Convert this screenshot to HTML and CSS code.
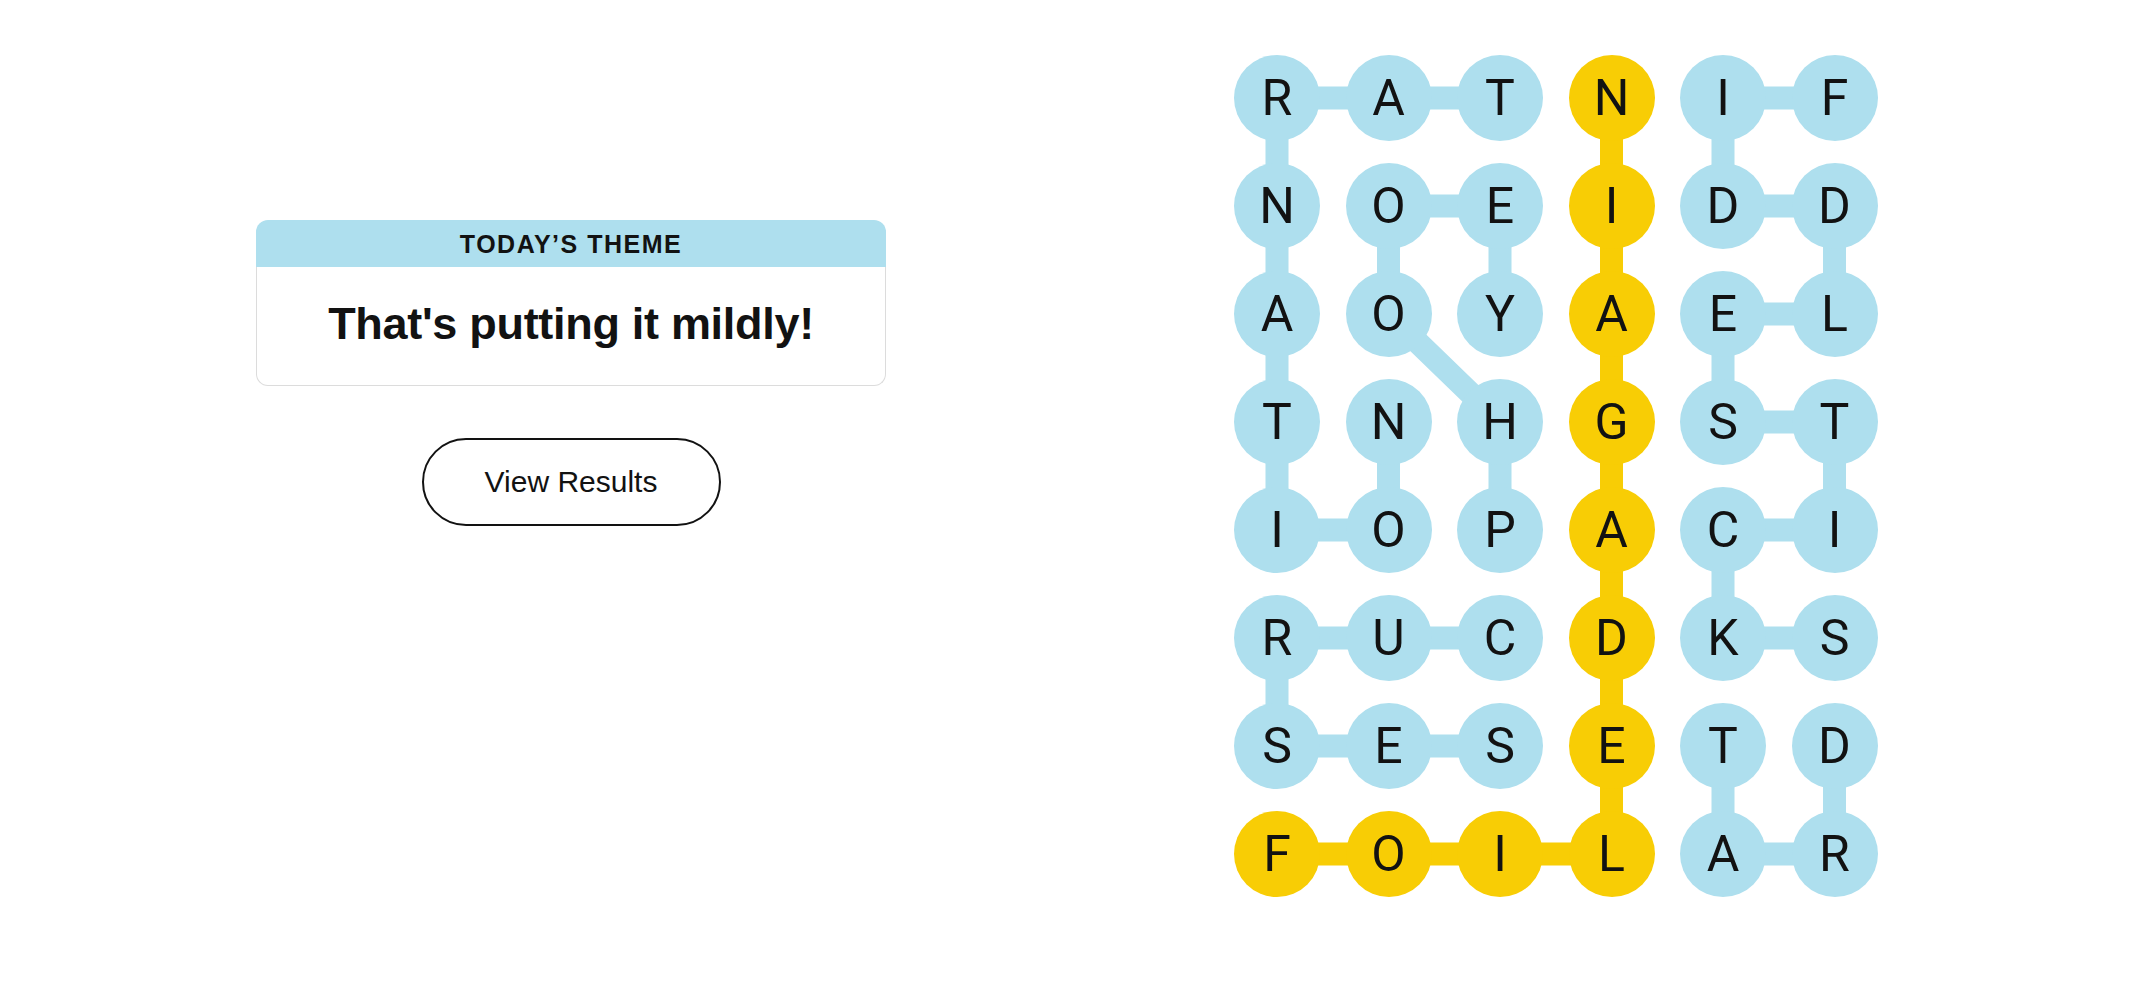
FILE: index.html
```html
<!DOCTYPE html>
<html lang="en">
<head>
<meta charset="utf-8">
<title>Strands</title>
<link rel="stylesheet" href="styles.css">
</head>
<body>
<main class="page">
  <section class="side">
    <div class="theme-card">
      <div class="theme-head">TODAY’S THEME</div>
      <div class="theme-body">That's putting it mildly!</div>
    </div>
    <button class="results-btn" type="button">View Results</button>
  </section>

  <section class="board">
    <svg class="links" viewBox="0 0 643.5 842" width="643.5" height="842" aria-hidden="true">
      <polyline class="link blue" points="266,43 154.5,43 43,43 43,151 43,259 43,367 43,475 154.5,475 154.5,367"/>
      <polyline class="link blue" points="266,475 266,367 154.5,259 154.5,151 266,151 266,259"/>
      <polyline class="link blue" points="266,583 154.5,583 43,583 43,691 154.5,691 266,691"/>
      <polyline class="link blue" points="600.5,43 489,43 489,151 600.5,151 600.5,259 489,259 489,367 600.5,367 600.5,475 489,475 489,583 600.5,583"/>
      <polyline class="link blue" points="600.5,691 600.5,799 489,799 489,691"/>
      <polyline class="link gold" points="43,799 154.5,799 266,799 377.5,799 377.5,43"/>
    </svg>
    <div class="grid">
      <button class="cell">R</button><button class="cell">A</button><button class="cell">T</button><button class="cell found">N</button><button class="cell">I</button><button class="cell">F</button>
      <button class="cell">N</button><button class="cell">O</button><button class="cell">E</button><button class="cell found">I</button><button class="cell">D</button><button class="cell">D</button>
      <button class="cell">A</button><button class="cell">O</button><button class="cell">Y</button><button class="cell found">A</button><button class="cell">E</button><button class="cell">L</button>
      <button class="cell">T</button><button class="cell">N</button><button class="cell">H</button><button class="cell found">G</button><button class="cell">S</button><button class="cell">T</button>
      <button class="cell">I</button><button class="cell">O</button><button class="cell">P</button><button class="cell found">A</button><button class="cell">C</button><button class="cell">I</button>
      <button class="cell">R</button><button class="cell">U</button><button class="cell">C</button><button class="cell found">D</button><button class="cell">K</button><button class="cell">S</button>
      <button class="cell">S</button><button class="cell">E</button><button class="cell">S</button><button class="cell found">E</button><button class="cell">T</button><button class="cell">D</button>
      <button class="cell found">F</button><button class="cell found">O</button><button class="cell found">I</button><button class="cell found">L</button><button class="cell">A</button><button class="cell">R</button>
    </div>
  </section>
</main>
</body>
</html>
```

FILE: styles.css
```css
html, body {
  margin: 0;
  padding: 0;
  background: #ffffff;
}

body {
  width: 2138px;
  height: 988px;
  overflow: hidden;
  font-family: "Liberation Sans", Arial, sans-serif;
  color: #121212;
}

.page {
  display: flex;
  align-items: flex-start;
  gap: 348px;
  padding: 55px 0 0 256px;
}

.side {
  width: 630px;
  margin-top: 165px;
  display: flex;
  flex-direction: column;
  align-items: center;
  gap: 52px;
}

.theme-card {
  width: 630px;
  box-sizing: border-box;
}

.theme-head {
  height: 47px;
  background: #aedfee;
  border-radius: 12px 12px 0 0;
  display: flex;
  align-items: center;
  justify-content: center;
  font-size: 25px;
  font-weight: 700;
  letter-spacing: 1.5px;
  color: #121212;
  padding-top: 2px;
  box-sizing: border-box;
}

.theme-body {
  height: 119px;
  box-sizing: border-box;
  border: 1.5px solid #dcdcdc;
  border-top: none;
  border-radius: 0 0 12px 12px;
  display: flex;
  align-items: center;
  justify-content: center;
  font-size: 45px;
  font-weight: 700;
  letter-spacing: -0.3px;
  color: #121212;
  padding-bottom: 4px;
}

.results-btn {
  width: 299px;
  height: 88px;
  border: 2px solid #121212;
  border-radius: 44px;
  background: #ffffff;
  font-family: "Liberation Sans", Arial, sans-serif;
  font-size: 30px;
  color: #121212;
  padding: 0;
  cursor: pointer;
}

.board {
  position: relative;
  width: 643.5px;
  height: 842px;
}

.links {
  position: absolute;
  left: 0;
  top: 0;
  overflow: visible;
}

.link {
  fill: none;
  stroke-width: 23px;
  stroke-linejoin: round;
  stroke-linecap: butt;
}

.link.blue { stroke: #aedfee; }
.link.gold { stroke: #f8cd05; }

.grid {
  position: relative;
  display: grid;
  grid-template-columns: repeat(6, 86px);
  grid-template-rows: repeat(8, 86px);
  column-gap: 25.5px;
  row-gap: 22px;
}

.cell {
  width: 86px;
  height: 86px;
  border: none;
  border-radius: 50%;
  background: #aedfee;
  padding: 0;
  display: flex;
  align-items: center;
  justify-content: center;
  font-family: Roboto, "Liberation Sans", sans-serif;
  font-size: 50px;
  font-weight: 400;
  line-height: 1;
  color: #121212;
}

.cell.found {
  background: #f8cd05;
}
```
